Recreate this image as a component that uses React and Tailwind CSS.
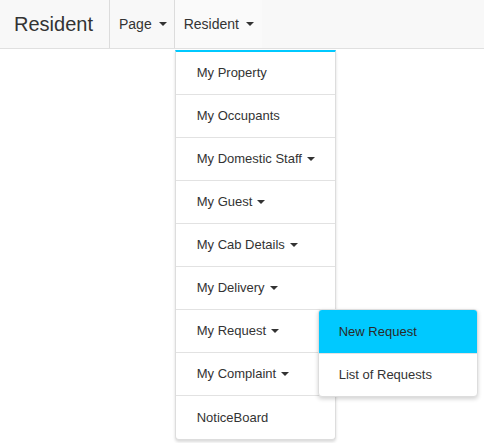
import React from 'react'

const Caret = ({ gap = 'ml-[7px]' }) => (
  <span className={`inline-block ${gap} align-middle w-0 h-0 border-t-[4px] border-t-[#333] border-x-[4px] border-x-transparent`} />
)

const items = [
  { label: 'My Property' },
  { label: 'My Occupants' },
  { label: 'My Domestic Staff', sub: true },
  { label: 'My Guest', sub: true },
  { label: 'My Cab Details', sub: true },
  { label: 'My Delivery', sub: true },
  { label: 'My Request', sub: true, open: true },
  { label: 'My Complaint', sub: true },
  { label: 'NoticeBoard' },
]

export default function App() {
  return (
    <div className="w-[484px] h-[443px] bg-white text-[14px] text-[#333] overflow-hidden" style={{ fontFamily: '"Liberation Sans", Arial, sans-serif' }}>
      {/* Navbar */}
      <div className="flex h-[49px] bg-[#f8f8f8] border-b border-[#e0e0e0]">
        <div className="w-[109px] pl-[14px] flex items-center text-[20px] text-[#333]">Resident</div>
        <div className="flex items-center pl-[9px] pr-[7px] border-l border-[#dcdcdc]">
          Page<Caret />
        </div>
        <div className="relative flex items-center pl-[9px] pr-[8px] border-l border-[#dcdcdc] bg-[#fafafa]">
          Resident<Caret />

          {/* Dropdown */}
          <div className="absolute left-0 top-[50px] w-[161px] bg-white border border-[#ddd] border-t-[2px] border-t-[#00c9ff] rounded-b-[4px] text-[13px] shadow-[0_2px_3px_rgba(0,0,0,0.15)] z-10">
            {items.map((it, i) => (
              <div key={it.label} className={`relative h-[43px] flex items-center pl-[21px] ${i < items.length - 1 ? 'border-b border-[#e2e2e2]' : ''}`}>
                {it.label}{it.sub && <Caret gap="ml-[5px]" />}
                {it.open && (
                  <div className="absolute left-[142px] top-[-1px] w-[160px] bg-white border border-[#ddd] rounded-[4px] shadow-[0_2px_4px_rgba(0,0,0,0.18)] overflow-hidden z-20">
                    <div className="h-[43px] flex items-center pl-[20px] bg-[#00c9ff] text-[#2a2a2a]">New Request</div>
                    <div className="h-[43px] flex items-center pl-[20px] border-t border-[#e2e2e2]">List of Requests</div>
                  </div>
                )}
              </div>
            ))}
          </div>
        </div>
      </div>
    </div>
  )
}
